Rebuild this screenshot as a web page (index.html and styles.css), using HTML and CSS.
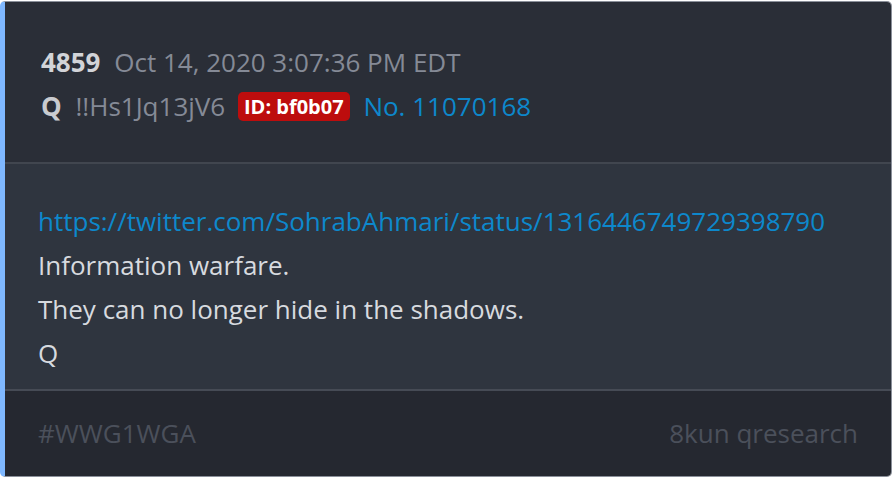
FILE: index.html
```html
<!DOCTYPE html>
<html lang="en">
<head>
  <meta charset="UTF-8">
  <title>Q Drop 4859</title>
  <link rel="stylesheet" href="styles.css">
</head>
<body>
  <div class="post">
    <div class="post-header">
      <div class="linha">
        <span class="numero">4859</span>
        <span class="data">Oct 14, 2020 3:07:36 PM EDT</span>
      </div>
      <div class="linha">
        <span class="autor">Q</span>
        <span class="trip">!!Hs1Jq13jV6</span>
        <span class="id-badge">ID: bf0b07</span>
        <span class="post-no">No. 11070168</span>
      </div>
    </div>
    <div class="post-body">
      <div class="linha"><a class="link" href="#">https://twitter.com/SohrabAhmari/status/1316446749729398790</a></div>
      <div class="linha">Information warfare.</div>
      <div class="linha">They can no longer hide in the shadows.</div>
      <div class="linha">Q</div>
    </div>
    <div class="post-footer">
      <span>#WWG1WGA</span>
      <span>8kun qresearch</span>
    </div>
  </div>
</body>
</html>
```

FILE: styles.css
```css
html, body {
  margin: 0;
  padding: 0;
  background-color: #ffffff;
}
body {
  font-family: "Open Sans", "Noto Sans", sans-serif;
  font-size: 26px;
}
.post {
  box-sizing: border-box;
  width: 892px;
  height: 476px;
  margin-top: 1px;
  border: 1px solid #8b909a;
  border-left: 5px solid #7fb8ff;
  border-radius: 5px;
  overflow: hidden;
  display: flex;
  flex-direction: column;
}
.linha {
  line-height: 44px;
  white-space: nowrap;
}
.post-header {
  background-color: #2a2e37;
  padding: 38px 36px 0;
  height: 162px;
  box-sizing: border-box;
  border-bottom: 2px solid #41464f;
}
.numero {
  font-weight: bold;
  color: #d2d4d8;
  margin-right: 7px;
}
.data {
  color: #858a96;
}
.autor {
  font-weight: bold;
  color: #c9cbcf;
  margin-right: 7px;
}
.trip {
  color: #858a96;
  margin-right: 6px;
}
.id-badge {
  display: inline-block;
  background-color: #bd0d0d;
  color: #ffffff;
  font-weight: bold;
  font-size: 20px;
  line-height: 29px;
  padding: 0 6px;
  border-radius: 5px;
  vertical-align: 2px;
  margin-right: 7px;
}
.post-no {
  color: #0d88cc;
}
.post-body {
  background-color: #2f353f;
  padding: 35px 33px 0;
  height: 227px;
  box-sizing: border-box;
  border-bottom: 2px solid #464b55;
  color: #d7dadf;
}
.link {
  color: #0d88cc;
  text-decoration: none;
}
.post-footer {
  flex: 1;
  background-color: #252830;
  color: #4b505b;
  display: flex;
  justify-content: space-between;
  align-items: center;
  padding: 0 33px 2px 33px;
}
```
